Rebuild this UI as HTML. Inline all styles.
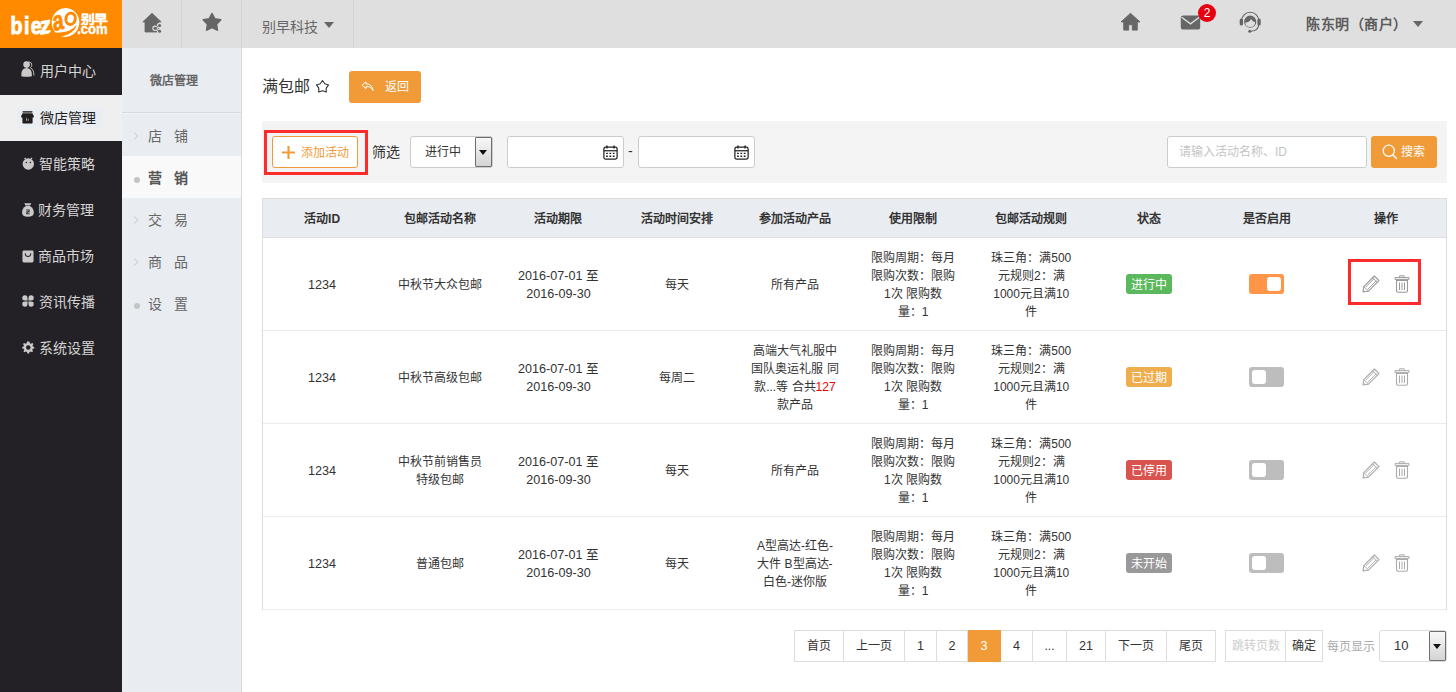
<!DOCTYPE html>
<html lang="zh-CN">
<head>
<meta charset="utf-8">
<title>满包邮</title>
<style>
*{box-sizing:border-box;margin:0;padding:0}
html,body{width:1456px;height:692px;overflow:hidden;background:#fff}
body{font-family:"Liberation Sans",sans-serif;font-size:13px;color:#333;position:relative}
.abs{position:absolute}
/* top bar */
#top{left:0;top:0;width:1456px;height:48px;background:#dfdfdf}
#logo{left:0;top:0;width:122px;height:48px;background:#ff8a00;color:#fff}
.tsep{top:0;width:1px;height:48px;background:#d3d3d3}
#corp{left:262px;top:17px;font-size:14px;color:#666;line-height:20px}
.caret{display:inline-block;width:0;height:0;border-left:5px solid transparent;border-right:5px solid transparent;border-top:6px solid #666;vertical-align:middle}
#user{left:1306px;top:14px;font-size:14px;font-weight:bold;color:#5c5c5c;letter-spacing:0.5px;line-height:20px;white-space:nowrap}
#badge{left:1198px;top:4px;width:18px;height:18px;border-radius:9px;background:#e60012;color:#fff;font-size:12px;line-height:18px;text-align:center}
/* sidebar */
#side{left:0;top:48px;width:122px;height:644px;background:#242126}
.sitem{left:0;width:122px;height:46px;color:#d4d4d4;font-size:14px;line-height:46px;white-space:nowrap}
.sitem span{position:absolute;left:39px;top:0}
.sitem svg{position:absolute}
.sitem.on{background:#efefef;color:#222}
.sitem.on:before{content:"";position:absolute;left:17px;top:13px;width:86px;height:20px;background:#eaedf1}
/* subnav */
#sub{left:122px;top:48px;width:120px;height:644px;background:#e9ecf1;border-right:1px solid #d9d9d9}
#subhd{left:0;top:0;width:119px;height:65px;box-shadow:0 1px 0 #f2f4f7;border-bottom:1px solid #d6d9de;text-align:center;line-height:67px;font-size:12px;font-weight:bold;color:#666;padding-right:16px}
.nitem{left:0;width:119px;height:42px;line-height:44px;font-size:14px;color:#666;white-space:nowrap}
.nitem span{position:absolute;left:26px;top:0;letter-spacing:12px}
.nitem.on{background:#f9f9f9;color:#555;font-weight:bold}
.chev{position:absolute;left:11px;top:18px;width:6px;height:8px}
.dot{position:absolute;left:12px;top:21px;width:6px;height:6px;border-radius:3px;background:#c4c4c4}
/* content */
#title{left:262px;top:75px;font-size:16px;color:#333;line-height:24px}
#back{left:349px;top:71px;width:72px;height:32px;background:#f19b38;border-radius:3px;color:#fff;font-size:12px;line-height:32px}
#bar{left:262px;top:121px;width:1185px;height:62px;background:#f4f4f4}
#redbox{left:264px;top:130px;width:104px;height:45px;border:3px solid #fc2c2c}
#add{left:272px;top:136px;width:86px;height:32px;border:1px solid #f19b38;border-radius:3px;background:#fff;color:#f19b38;font-size:12px;line-height:30px}
#flt{left:372px;top:142px;font-size:14px;color:#333;line-height:20px}
.inp{background:#fff;border:1px solid #ccc;border-radius:3px;height:32px;top:136px}
#search{left:1371px;top:136px;width:66px;height:32px;background:#f19b38;border-radius:3px;color:#fff;font-size:12px;line-height:32px}
/* table */
#tbl{left:262px;top:198px;width:1185px;height:412px;border:1px solid #ddd}
#thead{left:0;top:0;width:1183px;height:39px;background:#e9ecf1;border-bottom:1px solid #ddd}
.th{top:0;width:118.2px;height:38px;line-height:41px;text-align:center;font-size:12px;font-weight:bold;color:#333}
.row{left:0;width:1183px;height:93px;border-bottom:1px solid #ebebeb}
.td{top:0;width:118.2px;height:92px;display:flex;align-items:center;justify-content:center;text-align:center;font-size:12px;line-height:18px;color:#333;padding:0 14px}
.td{white-space:nowrap;padding:1px 0 0 0}
.n{font-size:12.6px}
.c0{left:0.0px}.c1{left:118.2px}.c2{left:236.4px}.c3{left:354.6px}.c4{left:472.8px}.c5{left:591.0px}.c6{left:709.2px}.c7{left:827.4px}.c8{left:945.6px}.c9{left:1063.8px}
.c7{padding:0}.c8{padding:0 2px 0 0}
.lab{display:inline-block;height:20px;line-height:23px;overflow:hidden;vertical-align:top;padding:0 5px;border-radius:3px;color:#fff;font-size:12px}
.sw{position:relative;width:35px;height:20px;border-radius:3px;background:#bdbdbd}
.sw i{position:absolute;left:3px;top:3px;width:14px;height:14px;border-radius:3px;background:#fff}
.sw.on{background:#ff9548}.sw.on i{left:18px}
/* pagination */
.pg{top:630px;height:32px;border:1px solid #ddd;border-left:none;background:#fff;text-align:center;line-height:31px;font-size:12px;color:#333}
.pg.n{font-size:12.6px}
</style>
</head>
<body>
<div id="top" class="abs">
 <div id="logo" class="abs">
  <svg class="abs" style="left:0;top:0" width="122" height="48" viewBox="0 0 122 48">
   <g font-family="Liberation Sans, sans-serif" font-weight="bold" fill="#fff">
   <text transform="translate(10.6 34) scale(0.82 1)" font-size="24" letter-spacing="1.6" stroke="#fff" stroke-width="0.9">bie</text>
   <text transform="translate(40.8 34.6) rotate(-10) scale(0.95 1)" font-size="24" font-style="italic" stroke="#fff" stroke-width="0.8">z</text>
   <ellipse cx="65.5" cy="22.5" rx="13.8" ry="14.5" transform="rotate(8 65.5 22.5)"/>
   <path d="M49 32.4 Q62 33.6 69.5 30.6 Q74 28.4 76.6 24.8 Q75.2 31 68.5 34.2 Q63 36.5 57 37.6 L49 40 Z" fill="#ff8a00"/>
   <ellipse cx="70.6" cy="18.8" rx="4.7" ry="5.7" fill="none" stroke="#ff8a00" stroke-width="3" transform="rotate(12 70.6 18.8)"/>
   <text transform="translate(53.6 31.3) rotate(-14) skewX(-8) scale(0.74 1)" font-size="27" fill="#ff8a00" stroke="#ff8a00" stroke-width="0.7">a</text>
   <text transform="translate(80.6 24.2) scale(1.14 1)" font-size="12" stroke="#fff" stroke-width="0.3">别早</text>
   <text transform="translate(77.2 34.3) scale(0.9 1)" font-size="14.5" stroke="#fff" stroke-width="0.4">.com</text>
   </g>
  </svg>
 </div>
 <div class="abs tsep" style="left:181px"></div>
 <div class="abs tsep" style="left:241px"></div>
 <div class="abs tsep" style="left:353px"></div>
 <svg class="abs" style="left:142px;top:12px" width="22" height="22" viewBox="0 0 22 22"><path d="M10 1.2 L0.8 9.9 H3 V20 H17 V9.9 H19.2 Z" fill="#666" stroke="#666" stroke-width="0.8" stroke-linejoin="round"/><g stroke="#dfdfdf" stroke-width="2.4" fill="#dfdfdf"><path d="M17.6 13.4 L13 16.3 L17.6 19.3" fill="none"/><circle cx="17.6" cy="13.4" r="1.5"/><circle cx="13" cy="16.3" r="1.5"/><circle cx="17.6" cy="19.3" r="1.5"/></g><g stroke="#666" fill="#666"><path d="M17.6 13.4 L13 16.3 L17.6 19.3" fill="none" stroke-width="0.9"/><circle cx="17.6" cy="13.4" r="1.5" stroke="none"/><circle cx="13" cy="16.3" r="1.5" stroke="none"/><circle cx="17.6" cy="19.3" r="1.5" stroke="none"/></g></svg>
 <svg class="abs" style="left:201px;top:12px" width="22" height="20" viewBox="0 0 24 22"><path d="M12.00 1.80 L15.06 7.59 L21.51 8.71 L16.95 13.41 L17.88 19.89 L12.00 17.00 L6.12 19.89 L7.05 13.41 L2.49 8.71 L8.94 7.59 Z" fill="#666" stroke="#666" stroke-width="1.8" stroke-linejoin="round"/></svg>
 <div id="corp" class="abs">别早科技 <span class="caret" style="margin-left:2px;margin-top:-6px"></span></div>
 <svg class="abs" style="left:1120px;top:12px" width="21" height="19" viewBox="0 0 23 21"><path d="M11.5 1.5 L1 11 H4 V20 H9.5 V14 H13.5 V20 H19 V11 H22 Z" fill="#666" stroke="#666" stroke-width="1" stroke-linejoin="round"/></svg>
 <svg class="abs" style="left:1180px;top:15px" width="21" height="15" viewBox="0 0 23 17"><rect x="0.5" y="0.5" width="22" height="16" rx="3" fill="#666"/><path d="M1.5 2.5 L11.5 10 L21.5 2.5" stroke="#dfdfdf" stroke-width="1.6" fill="none"/></svg>
 <div id="badge" class="abs">2</div>
 <svg class="abs" style="left:1239px;top:10px" width="22" height="24" viewBox="0 0 22 24"><path d="M2.5 11 A8.7 8.7 0 0 1 19.9 11" fill="none" stroke="#666" stroke-width="1.1"/><rect x="0.7" y="8.6" width="3.3" height="6.8" rx="1.5" fill="#666"/><rect x="18.4" y="8.6" width="3.3" height="6.8" rx="1.5" fill="#666"/><circle cx="11.2" cy="11.7" r="6.1" fill="#666"/><path d="M6.3 12.6 Q9 12.6 10.6 11 Q11.6 10 12 8.9 Q13.4 11.6 16.1 12.2 Q16.1 17 11.2 17 Q6.3 17 6.3 12.6Z" fill="#dfdfdf"/><path d="M19.6 15 Q19.4 20.6 12 21.3" fill="none" stroke="#666" stroke-width="1.1"/><circle cx="10.8" cy="21.3" r="1.5" fill="#666"/></svg>
 <div id="user" class="abs">陈东明（商户） <span class="caret" style="margin-left:1px;margin-top:-2px"></span></div>
</div>
<div id="side" class="abs">
 <div class="abs sitem" style="top:0"><svg style="left:21px;top:13px" width="14" height="16" viewBox="0 0 14 16"><circle cx="5.6" cy="3.6" r="3.3" fill="#c9c9c9"/><path d="M0.4 15.2 Q-0.2 7 5.6 7 Q11.4 7 10.8 15.2 Q5.6 16.4 0.4 15.2Z" fill="#c9c9c9"/><path d="M7.8 0.8 Q11.2 1.2 10.8 4.4 Q10.5 6 9.4 6.8 Q13 8.5 12.9 14.6" fill="none" stroke="#c9c9c9" stroke-width="0.9"/></svg><span style="left:40px">用户中心</span></div>
 <div class="abs sitem on" style="top:47px;height:46px"><svg style="left:21px;top:16px" width="13" height="13" viewBox="0 0 13 13"><rect x="1.6" y="0.2" width="9.8" height="1.4" fill="#231f20"/><path d="M1.6 2.2 H11.4 L12.8 5 V6.6 H0.2 V5 Z" fill="#231f20"/><rect x="1.4" y="5.5" width="10.2" height="7" rx="0.8" fill="#231f20"/><rect x="5" y="6.8" width="0.9" height="3" fill="#aaa"/><rect x="6.8" y="7.8" width="0.9" height="2" fill="#aaa"/></svg><span style="left:40px">微店管理</span></div>
 <div class="abs sitem" style="top:93px"><svg style="left:22px;top:15px" width="13" height="14" viewBox="0 0 13 14"><circle cx="6.3" cy="8" r="5.7" fill="#c9c9c9"/><path d="M3.6 3.2 L2.6 1.8 M9 3.2 L10 1.8" stroke="#c9c9c9" stroke-width="1.3"/><circle cx="4.3" cy="6.6" r="0.75" fill="#242126"/><circle cx="8.3" cy="6.6" r="0.75" fill="#242126"/></svg><span>智能策略</span></div>
 <div class="abs sitem" style="top:139px"><svg style="left:22px;top:16px" width="12" height="14" viewBox="0 0 12 14"><path d="M2.2 0.2 H9.4 L8 2.4 H3.6 Z" fill="#c9c9c9"/><path d="M3.8 3 H7.8 Q11.8 5.2 11.8 9.4 Q11.8 13.8 5.9 13.8 Q0.1 13.8 0.1 9.4 Q0.1 5.2 3.8 3Z" fill="#c9c9c9"/><path d="M4.2 7 H7.6 L4.2 10.8 H7.6 M4 8.9 H7.8" stroke="#242126" stroke-width="0.9" fill="none"/></svg><span style="left:38px">财务管理</span></div>
 <div class="abs sitem" style="top:185px"><svg style="left:22px;top:17px" width="12" height="13" viewBox="0 0 13 14"><rect x="0.5" y="0.5" width="12" height="13" rx="1.5" fill="#c9c9c9"/><path d="M3.5 3.5 Q3.5 7 6.5 7 Q9.5 7 9.5 3.5" stroke="#242126" stroke-width="1.1" fill="none"/></svg><span style="left:38px">商品市场</span></div>
 <div class="abs sitem" style="top:231px"><svg style="left:22px;top:16px" width="12" height="12" viewBox="0 0 13 13"><circle cx="3.2" cy="3.2" r="2.9" fill="#c9c9c9"/><circle cx="9.8" cy="3.2" r="2.9" fill="#c9c9c9"/><circle cx="3.2" cy="9.8" r="2.9" fill="#c9c9c9"/><circle cx="9.8" cy="9.8" r="2.9" fill="#c9c9c9"/><rect x="3" y="3" width="7" height="7" fill="#c9c9c9"/><rect x="6" y="0" width="1" height="13" fill="#242126"/><rect x="0" y="6" width="13" height="1" fill="#242126"/></svg><span>资讯传播</span></div>
 <div class="abs sitem" style="top:277px"><svg style="left:22px;top:16px" width="12.5" height="12.5" viewBox="0 0 14 14"><path d="M7 0.5 L8.3 0.6 L8.8 2.4 L10 3 L11.7 2.1 L12.8 3.3 L11.8 4.9 L12.2 6.1 L13.7 6.6 V8.3 L12 8.8 L11.5 10 L12.4 11.6 L11.2 12.7 L9.6 11.8 L8.4 12.3 L7.9 13.9 H6.1 L5.6 12.3 L4.4 11.8 L2.8 12.7 L1.6 11.6 L2.5 10 L2 8.8 L0.3 8.3 V6.6 L1.8 6.1 L2.2 4.9 L1.2 3.3 L2.3 2.1 L4 3 L5.2 2.4 L5.7 0.6 Z" fill="#c9c9c9"/><circle cx="7" cy="7.3" r="2.5" fill="#242126"/></svg><span>系统设置</span></div>
</div>
<div id="sub" class="abs">
 <div id="subhd" class="abs">微店管理</div>
 <div class="abs nitem" style="top:66px"><svg class="chev" viewBox="0 0 6 8"><path d="M1 0.5 L5 4 L1 7.5" fill="none" stroke="#c8c8c8" stroke-width="1"/></svg><span>店铺</span></div>
 <div class="abs nitem on" style="top:108px"><i class="dot"></i><span>营销</span></div>
 <div class="abs nitem" style="top:150px"><svg class="chev" viewBox="0 0 6 8"><path d="M1 0.5 L5 4 L1 7.5" fill="none" stroke="#c8c8c8" stroke-width="1"/></svg><span>交易</span></div>
 <div class="abs nitem" style="top:192px"><svg class="chev" viewBox="0 0 6 8"><path d="M1 0.5 L5 4 L1 7.5" fill="none" stroke="#c8c8c8" stroke-width="1"/></svg><span>商品</span></div>
 <div class="abs nitem" style="top:234px"><i class="dot"></i><span>设置</span></div>
</div>
<div id="title" class="abs">满包邮</div>
<svg class="abs" style="left:315px;top:79px" width="15" height="15" viewBox="0 0 15 15"><path d="M7.50 1.50 L9.79 4.74 L13.59 5.92 L11.21 9.11 L11.26 13.08 L7.50 11.80 L3.74 13.08 L3.79 9.11 L1.41 5.92 L5.21 4.74 Z" fill="none" stroke="#333" stroke-width="1.1" stroke-linejoin="round"/></svg>
<div id="back" class="abs"><svg class="abs" style="left:12px;top:10px" width="13" height="11" viewBox="0 0 13 11"><path d="M5 0.8 L1 4.2 L5 7.6 V5.6 Q10 5 12 9.5 Q11.5 3.2 5 2.8 Z" fill="none" stroke="#fff" stroke-width="1" stroke-linejoin="round"/></svg><span class="abs" style="left:36px;top:0">返回</span></div>
<div id="bar" class="abs"></div>
<div id="redbox" class="abs"></div>
<div id="add" class="abs"><svg class="abs" style="left:9px;top:9px" width="13" height="13" viewBox="0 0 13 13"><path d="M6.5 0 V13 M0 6.5 H13" stroke="#f19b38" stroke-width="2.1"/></svg><span class="abs" style="left:28px;top:1px">添加活动</span></div>
<div id="flt" class="abs">筛选</div>
<div class="abs inp" style="left:410px;width:83px"><span class="abs" style="left:14px;top:0;line-height:30px;font-size:12px">进行中</span><div class="abs" style="left:64px;top:0;width:17px;height:30px;border:1px solid #6e6e6e;border-radius:1px;background:linear-gradient(#f8f8f8,#d4d4d4)"><i class="abs" style="left:3px;top:12px;border-left:4px solid transparent;border-right:4px solid transparent;border-top:5px solid #111"></i></div></div>
<div class="abs inp" style="left:507px;width:117px"></div>
<div class="abs" style="left:628px;top:141px;font-size:14px;line-height:20px">-</div>
<div class="abs inp" style="left:638px;width:117px"></div>
<svg class="abs" style="left:603px;top:145px" width="15" height="15" viewBox="0 0 17 17"><rect x="1" y="2.5" width="15" height="13.5" rx="2" fill="none" stroke="#222" stroke-width="1.4"/><path d="M1 6.5 H16" stroke="#222" stroke-width="1.4"/><path d="M4.5 0.5 V4 M12.5 0.5 V4" stroke="#222" stroke-width="1.6"/><path d="M3.5 9.5 h2 m1.8 0 h2 m1.8 0 h2 M3.5 12.7 h2 m1.8 0 h2 m1.8 0 h2" stroke="#222" stroke-width="1.6"/></svg><svg class="abs" style="left:734px;top:145px" width="15" height="15" viewBox="0 0 17 17"><rect x="1" y="2.5" width="15" height="13.5" rx="2" fill="none" stroke="#222" stroke-width="1.4"/><path d="M1 6.5 H16" stroke="#222" stroke-width="1.4"/><path d="M4.5 0.5 V4 M12.5 0.5 V4" stroke="#222" stroke-width="1.6"/><path d="M3.5 9.5 h2 m1.8 0 h2 m1.8 0 h2 M3.5 12.7 h2 m1.8 0 h2 m1.8 0 h2" stroke="#222" stroke-width="1.6"/></svg>
<div class="abs inp" style="left:1167px;width:200px"><span class="abs" style="left:11px;top:0;line-height:30px;font-size:12px;color:#c4c4c4">请输入活动名称、ID</span></div>
<div id="search" class="abs"><svg class="abs" style="left:11px;top:8px" width="16" height="16" viewBox="0 0 16 16"><circle cx="6.8" cy="6.8" r="5.6" fill="none" stroke="#fff" stroke-width="1.3"/><path d="M10.8 10.8 L15 15" stroke="#fff" stroke-width="1.3"/></svg><span class="abs" style="left:30px;top:0">搜索</span></div>
<div id="tbl" class="abs">
 <div id="thead" class="abs"><div class="abs th c0">活动ID</div><div class="abs th c1">包邮活动名称</div><div class="abs th c2">活动期限</div><div class="abs th c3">活动时间安排</div><div class="abs th c4">参加活动产品</div><div class="abs th c5">使用限制</div><div class="abs th c6">包邮活动规则</div><div class="abs th c7">状态</div><div class="abs th c8">是否启用</div><div class="abs th c9">操作</div></div>
 <div class="abs row" style="top:39px"><div class="abs td c0"><span class="n">1234</span></div><div class="abs td c1">中秋节大众包邮</div><div class="abs td c2"><span class="n">2016-07-01 至<br>2016-09-30</span></div><div class="abs td c3">每天</div><div class="abs td c4">所有产品</div><div class="abs td c5"><span>限购周期：每月<br>限购次数：限购<br>1次 限购数<br>量：1</span></div><div class="abs td c6"><span>珠三角：满500<br>元规则2：满<br>1000元且满10<br>件</span></div><div class="abs td c7"><span class="lab" style="background:#5cb85c">进行中</span></div><div class="abs td c8"><div class="sw on"><i></i></div></div><div class="abs td c9"></div><svg class="abs" style="left:1099px;top:37px" width="18" height="18" viewBox="0 0 18 18"><path d="M12.4 1 L17 5.6 L6.4 16.2 L1 17 L1.8 11.6 Z" fill="none" stroke="#999" stroke-width="1.1" stroke-linejoin="round"/><path d="M10.6 2.8 L15.2 7.4 M1.8 11.6 L6.4 16.2 M3.6 12.2 L12.2 3.6 M5.6 14.4 L14.4 5.6 M1.3 15 L3 16.7" stroke="#999" stroke-width="0.9" fill="none"/></svg><svg class="abs" style="left:1131px;top:37px" width="16" height="18" viewBox="0 0 16 18"><path d="M1 2.6 H15 V4.4 H1 Z M5.6 2.6 V0.8 H10.2 V2.6" fill="none" stroke="#999" stroke-width="1"/><path d="M2.5 5.5 H13.5 V15.5 Q13.5 17.2 12 17.2 H4 Q2.5 17.2 2.5 15.5 Z" fill="none" stroke="#999" stroke-width="1.1"/><path d="M5.5 7.5 V15 M8 7.5 V15 M10.5 7.5 V15" stroke="#999" stroke-width="1"/></svg></div>
 <div class="abs row" style="top:132px"><div class="abs td c0"><span class="n">1234</span></div><div class="abs td c1">中秋节高级包邮</div><div class="abs td c2"><span class="n">2016-07-01 至<br>2016-09-30</span></div><div class="abs td c3">每周二</div><div class="abs td c4"><span>高端大气礼服中<br>国队奥运礼服 同<br>款...等 合共<b style="color:#e00;font-weight:normal">127</b><br>款产品</span></div><div class="abs td c5"><span>限购周期：每月<br>限购次数：限购<br>1次 限购数<br>量：1</span></div><div class="abs td c6"><span>珠三角：满500<br>元规则2：满<br>1000元且满10<br>件</span></div><div class="abs td c7"><span class="lab" style="background:#f0ad4e">已过期</span></div><div class="abs td c8"><div class="sw"><i></i></div></div><div class="abs td c9"></div><svg class="abs" style="left:1099px;top:37px" width="18" height="18" viewBox="0 0 18 18"><path d="M12.4 1 L17 5.6 L6.4 16.2 L1 17 L1.8 11.6 Z" fill="none" stroke="#aaa" stroke-width="1.1" stroke-linejoin="round"/><path d="M10.6 2.8 L15.2 7.4 M1.8 11.6 L6.4 16.2 M3.6 12.2 L12.2 3.6 M5.6 14.4 L14.4 5.6 M1.3 15 L3 16.7" stroke="#aaa" stroke-width="0.9" fill="none"/></svg><svg class="abs" style="left:1131px;top:37px" width="16" height="18" viewBox="0 0 16 18"><path d="M1 2.6 H15 V4.4 H1 Z M5.6 2.6 V0.8 H10.2 V2.6" fill="none" stroke="#aaa" stroke-width="1"/><path d="M2.5 5.5 H13.5 V15.5 Q13.5 17.2 12 17.2 H4 Q2.5 17.2 2.5 15.5 Z" fill="none" stroke="#aaa" stroke-width="1.1"/><path d="M5.5 7.5 V15 M8 7.5 V15 M10.5 7.5 V15" stroke="#aaa" stroke-width="1"/></svg></div>
 <div class="abs row" style="top:225px"><div class="abs td c0"><span class="n">1234</span></div><div class="abs td c1"><span>中秋节前销售员<br>特级包邮</span></div><div class="abs td c2"><span class="n">2016-07-01 至<br>2016-09-30</span></div><div class="abs td c3">每天</div><div class="abs td c4">所有产品</div><div class="abs td c5"><span>限购周期：每月<br>限购次数：限购<br>1次 限购数<br>量：1</span></div><div class="abs td c6"><span>珠三角：满500<br>元规则2：满<br>1000元且满10<br>件</span></div><div class="abs td c7"><span class="lab" style="background:#d9534f">已停用</span></div><div class="abs td c8"><div class="sw"><i></i></div></div><div class="abs td c9"></div><svg class="abs" style="left:1099px;top:37px" width="18" height="18" viewBox="0 0 18 18"><path d="M12.4 1 L17 5.6 L6.4 16.2 L1 17 L1.8 11.6 Z" fill="none" stroke="#aaa" stroke-width="1.1" stroke-linejoin="round"/><path d="M10.6 2.8 L15.2 7.4 M1.8 11.6 L6.4 16.2 M3.6 12.2 L12.2 3.6 M5.6 14.4 L14.4 5.6 M1.3 15 L3 16.7" stroke="#aaa" stroke-width="0.9" fill="none"/></svg><svg class="abs" style="left:1131px;top:37px" width="16" height="18" viewBox="0 0 16 18"><path d="M1 2.6 H15 V4.4 H1 Z M5.6 2.6 V0.8 H10.2 V2.6" fill="none" stroke="#aaa" stroke-width="1"/><path d="M2.5 5.5 H13.5 V15.5 Q13.5 17.2 12 17.2 H4 Q2.5 17.2 2.5 15.5 Z" fill="none" stroke="#aaa" stroke-width="1.1"/><path d="M5.5 7.5 V15 M8 7.5 V15 M10.5 7.5 V15" stroke="#aaa" stroke-width="1"/></svg></div>
 <div class="abs row" style="top:318px"><div class="abs td c0"><span class="n">1234</span></div><div class="abs td c1">普通包邮</div><div class="abs td c2"><span class="n">2016-07-01 至<br>2016-09-30</span></div><div class="abs td c3">每天</div><div class="abs td c4"><span>A型高达-红色-<br>大件 B型高达-<br>白色-迷你版</span></div><div class="abs td c5"><span>限购周期：每月<br>限购次数：限购<br>1次 限购数<br>量：1</span></div><div class="abs td c6"><span>珠三角：满500<br>元规则2：满<br>1000元且满10<br>件</span></div><div class="abs td c7"><span class="lab" style="background:#999">未开始</span></div><div class="abs td c8"><div class="sw"><i></i></div></div><div class="abs td c9"></div><svg class="abs" style="left:1099px;top:37px" width="18" height="18" viewBox="0 0 18 18"><path d="M12.4 1 L17 5.6 L6.4 16.2 L1 17 L1.8 11.6 Z" fill="none" stroke="#aaa" stroke-width="1.1" stroke-linejoin="round"/><path d="M10.6 2.8 L15.2 7.4 M1.8 11.6 L6.4 16.2 M3.6 12.2 L12.2 3.6 M5.6 14.4 L14.4 5.6 M1.3 15 L3 16.7" stroke="#aaa" stroke-width="0.9" fill="none"/></svg><svg class="abs" style="left:1131px;top:37px" width="16" height="18" viewBox="0 0 16 18"><path d="M1 2.6 H15 V4.4 H1 Z M5.6 2.6 V0.8 H10.2 V2.6" fill="none" stroke="#aaa" stroke-width="1"/><path d="M2.5 5.5 H13.5 V15.5 Q13.5 17.2 12 17.2 H4 Q2.5 17.2 2.5 15.5 Z" fill="none" stroke="#aaa" stroke-width="1.1"/><path d="M5.5 7.5 V15 M8 7.5 V15 M10.5 7.5 V15" stroke="#aaa" stroke-width="1"/></svg></div>
</div>
<div class="abs" style="left:1348px;top:259px;width:73px;height:46px;border:3px solid #fc2c2c"></div>
<div class="abs pg" style="left:794px;width:50px;border-left:1px solid #ddd;">首页</div><div class="abs pg" style="left:844px;width:61px;">上一页</div><div class="abs pg n" style="left:905px;width:32px;">1</div><div class="abs pg n" style="left:937px;width:31px;">2</div><div class="abs pg n" style="left:968px;width:33px;background:#f19b38;border-color:#f19b38;color:#fff;">3</div><div class="abs pg n" style="left:1001px;width:32px;">4</div><div class="abs pg" style="left:1033px;width:34px;">...</div><div class="abs pg n" style="left:1067px;width:39px;">21</div><div class="abs pg" style="left:1106px;width:61px;">下一页</div><div class="abs pg" style="left:1167px;width:49px;">尾页</div><div class="abs pg" style="left:1225px;width:61px;border-left:1px solid #ddd;color:#ccc">跳转页数</div><div class="abs pg" style="left:1286px;width:37px">确定</div><div class="abs" style="left:1327px;top:637px;font-size:12px;color:#aaa;line-height:20px">每页显示</div><div class="abs" style="left:1379px;top:630px;width:68px;height:32px;border:1px solid #ddd;border-radius:3px;background:#fff"><span class="abs" style="left:14px;top:0;line-height:30px;font-size:13px">10</span><div class="abs" style="left:49px;top:0;width:17px;height:30px;border:1px solid #6e6e6e;border-radius:1px;background:linear-gradient(#f8f8f8,#d4d4d4)"><i class="abs" style="left:3px;top:12px;border-left:4px solid transparent;border-right:4px solid transparent;border-top:5px solid #111"></i></div></div>
</body>
</html>
